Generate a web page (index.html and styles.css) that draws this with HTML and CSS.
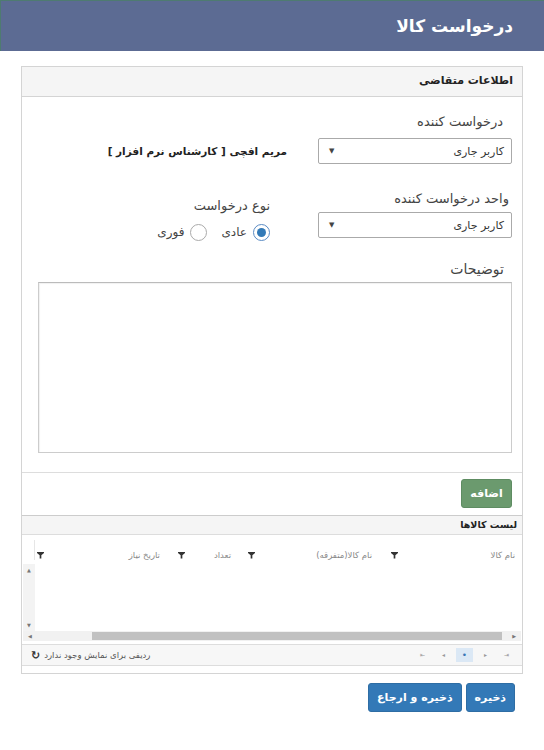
FILE: index.html
```html
<!DOCTYPE html>
<html lang="fa" dir="rtl">
<head>
<meta charset="utf-8">
<title>درخواست کالا</title>
<link rel="stylesheet" href="styles.css">
</head>
<body>
<header class="topbar"><h1 class="title">درخواست کالا</h1></header>
<main class="page">
  <section class="panel">
    <div class="panel-heading">اطلاعات متقاضی</div>
    <div class="panel-body">
      <div class="row">
        <div class="field">
          <label class="label">درخواست کننده</label>
          <div class="select"><span>کاربر جاری</span><span class="caret">▼</span></div>
        </div>
        <div class="person">مریم افچی [ کارشناس نرم افزار ]</div>
      </div>
      <div class="row row2">
        <div class="field">
          <label class="label">واحد درخواست کننده</label>
          <div class="select"><span>کاربر جاری</span><span class="caret">▼</span></div>
        </div>
        <div class="type">
          <label class="label">نوع درخواست</label>
          <div class="radios">
            <span class="radio"><span class="dot checked"></span>عادی</span>
            <span class="radio"><span class="dot"></span>فوری</span>
          </div>
        </div>
      </div>
      <label class="label desc-label">توضیحات</label>
      <div class="textarea"></div>
    </div>
    <div class="panel-footer"><button class="btn btn-green">اضافه</button></div>
    <div class="grid">
      <div class="grid-title">لیست کالاها</div>
      <div class="grid-head">
        <div class="col c1"><span>نام کالا</span><span class="funnel"></span></div>
        <div class="col c2"><span>نام کالا(متفرقه)</span><span class="funnel"></span></div>
        <div class="col c3"><span>تعداد</span><span class="funnel"></span></div>
        <div class="col c4"><span>تاریخ نیاز</span><span class="funnel"></span></div>
        <div class="col c5"></div>
      </div>
      <div class="grid-content">
        <div class="vscroll"><span class="arr">▲</span><span class="arr">▼</span></div>
      </div>
      <div class="hscroll"><span class="arr">▶</span><span class="thumb"></span><span class="arr">◀</span></div>
      <div class="pager">
        <div class="pages">
          <span class="pg">⇥</span><span class="pg">▸</span><span class="pg cur">•</span><span class="pg">◂</span><span class="pg">⇤</span>
        </div>
        <div class="status">ردیفی برای نمایش وجود ندارد <span class="refresh">↻</span></div>
      </div>
    </div>
  </section>
  <div class="actions">
    <button class="btn btn-blue">ذخیره</button>
    <button class="btn btn-blue">ذخیره و ارجاع</button>
  </div>
</main>
</body>
</html>
```
FILE: styles.css
```css
* { box-sizing: border-box; }
html, body { margin: 0; padding: 0; background: #fff; }
body {
  direction: rtl;
  font-family: "DejaVu Sans", "Noto Sans", sans-serif;
  color: #333;
  width: 544px;
}
.topbar {
  height: 51px;
  background: #5c6b93;
  border-top: 1px solid #4e7b71;
  border-left: 1px solid #4e7b71;
  display: flex;
  align-items: center;
  padding-right: 31px;
}
.title {
  margin: 0;
  color: #fff;
  font-size: 17px;
  font-weight: bold;
}
.page { padding: 15px 21px 0 21px; }
.panel {
  border: 1px solid #d4d4d4;
  padding-bottom: 7px;
}
.panel-heading {
  height: 30px;
  background: #f5f5f5;
  border-bottom: 1px solid #d4d4d4;
  font-size: 11px;
  font-weight: bold;
  line-height: 28px;
  padding-right: 9px;
  color: #222;
}
.panel-body { padding: 15px 10px 19px 16px; }
.row { display: flex; align-items: flex-end; }
.row2 { margin-top: 25px; align-items: flex-start; }
.field { width: 194px; }
.label {
  display: block;
  font-size: 13px;
  line-height: 20px;
  color: #444;
  padding-right: 9px;
}
.row .field .label { margin-bottom: 6px; }
.row2 .field .label { margin-bottom: 3px; padding-right: 3px; }
.select {
  height: 26px;
  border: 1px solid #aaa;
  border-radius: 2px;
  display: flex;
  justify-content: space-between;
  align-items: center;
  padding: 0 7px 0 10px;
  font-size: 11px;
  color: #333;
}
.caret { font-size: 7px; color: #444; }
.person {
  margin-right: 31px;
  line-height: 26px;
  font-size: 10.5px;
  font-weight: bold;
  color: #222;
}
.type { margin-right: 48px; padding-top: 7px; }
.type .label { padding-right: 0; margin-bottom: 5px; }
.radios { display: flex; gap: 14px; font-size: 12px; color: #444; }
.radio { display: flex; align-items: center; gap: 6px; line-height: 22px; }
.dot {
  width: 17px; height: 17px;
  border: 1px solid #aaa;
  border-radius: 50%;
  background: #fff;
  position: relative;
}
.dot.checked { border-color: #5a8bc4; }
.dot.checked::after {
  content: "";
  position: absolute;
  left: 3px; top: 3px;
  width: 9px; height: 9px;
  border-radius: 50%;
  background: #337ab7;
}
.desc-label { margin-top: 16px; font-size: 14px; padding-right: 8px; }
.textarea {
  margin-top: 3px;
  height: 171px;
  border: 1px solid #ccc;
  border-top-color: #bbb;
  box-shadow: inset 1px 1px 1px rgba(0,0,0,0.06);
}
.panel-footer {
  border-top: 1px solid #ddd;
  padding: 6px 10px 7px;
  display: flex;
}
.btn {
  font-family: inherit;
  font-weight: bold;
  font-size: 11px;
  color: #fff;
  border-radius: 3px;
  height: 29px;
  padding: 0 8px;
  cursor: pointer;
}
.btn-green { background: #6b9a6e; border: 1px solid #5e8c62; width: 51px; padding: 0; }
.btn-blue { background: #3379b7; border: 1px solid #2e6da4; }
.grid { border-top: 1px solid #ccc; border-bottom: 1px solid #ddd; }
.grid-title {
  height: 19px;
  background: #f5f5f5;
  border-bottom: 1px solid #ddd;
  font-size: 9.5px;
  font-weight: bold;
  line-height: 18px;
  padding-right: 5px;
  color: #222;
}
.grid-head {
  display: flex;
  height: 29px;
  align-items: flex-end;
  padding-bottom: 4px;
  font-size: 8.5px;
  color: #888;
}
.col { display: flex; align-items: center; justify-content: space-between; }
.c1 { width: 133px; padding: 0 7px 0 2px; }
.c2 { width: 143px; padding: 0 17px 0 2px; }
.c3 { width: 70px; padding: 0 15px 0 2px; }
.c4 { width: 141px; padding: 0 16px 0 2px; }
.c5 { flex: 1; height: 20px; border-right: 1px solid #e6e6e6; }
.funnel {
  display: inline-block;
  width: 7px; height: 7px;
  background: #333;
  clip-path: polygon(0 0, 100% 0, 100% 20%, 62% 55%, 62% 100%, 38% 100%, 38% 55%, 0 20%);
}
.grid-content { height: 67px; display: flex; justify-content: flex-end; }
.vscroll {
  width: 12px;
  margin-left: 1px;
  background: #f3f3f3;
  display: flex;
  flex-direction: column;
  justify-content: space-between;
  align-items: center;
  padding: 2px 0;
}
.arr { font-size: 5px; color: #777; line-height: 8px; }
.hscroll {
  height: 10px;
  background: #f1f1f1;
  display: flex;
  align-items: center;
  padding: 0 5px;
  gap: 10px;
  margin: 0 1px;
}
.thumb { flex: 1; height: 8px; background: #c1c1c1; margin-left: 50px; }
.pager {
  margin-top: 3px;
  height: 21px;
  background: #f7f7f7;
  border-top: 1px solid #ddd;
  display: flex;
  justify-content: space-between;
  align-items: center;
  padding: 0 7px 0 9px;
  font-size: 8.5px;
  color: #555;
}
.pages { display: flex; align-items: center; gap: 4px; }
.pg { width: 17px; height: 14px; text-align: center; line-height: 14px; font-size: 6px; color: #999; }
.pg.cur { background: #dbe8f5; color: #3a76b6; font-size: 9px; }
.status { display: flex; align-items: center; gap: 4px; }
.refresh { font-size: 11px; color: #333; font-weight: bold; }
.actions {
  display: flex;
  gap: 4px;
  padding: 9px 8px 0 0;
}
```
